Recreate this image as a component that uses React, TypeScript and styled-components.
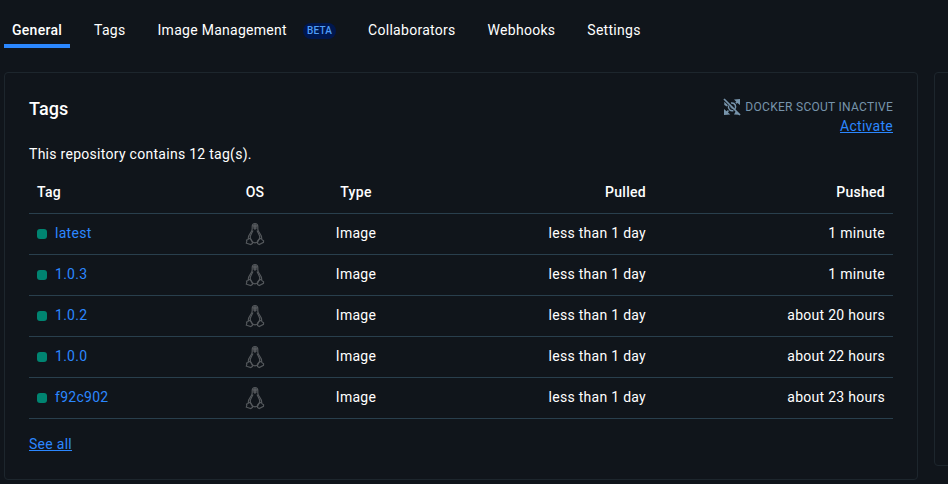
import React from "react";
import styled, { createGlobalStyle } from "styled-components";

const GlobalStyle = createGlobalStyle`
  * { box-sizing: border-box; }
  body {
    margin: 0;
    background: #10151b;
    color: #fff;
    font: 400 14px/20px Roboto, "Liberation Sans", sans-serif;
    letter-spacing: 0.28px;
    overflow: hidden;
  }
`;

const Page = styled.div`
  height: 484px;
  padding-left: 4px;
  overflow: hidden;
`;

const TabBar = styled.nav`
  display: flex;
  gap: 16px;
  height: 48px;
`;

const Tab = styled.a<{ $active?: boolean }>`
  display: flex;
  align-items: center;
  gap: 16px;
  padding: 16px 8px 0;
  border-bottom: 4px solid ${(p) => (p.$active ? "#2b87ff" : "transparent")};
  font-weight: ${(p) => (p.$active ? 500 : 400)};
  white-space: nowrap;
`;

const Badge = styled.span`
  height: 16px;
  margin-top: 1px;
  padding: 0 4px;
  border-radius: 8px;
  background: #00174f;
  color: #4f9df7;
  font-size: 10px;
  font-weight: 500;
  line-height: 16px;
  letter-spacing: 0.2px;
`;

const Columns = styled.main`
  display: flex;
  align-items: flex-start;
  gap: 16px;
  margin-top: 24px;
`;

const Card = styled.section`
  flex: none;
  width: 914px;
  height: 408px;
  padding: 24px;
  border: 1px solid #1d262d;
  border-radius: 4px;
`;

const SideCard = styled(Card)`
  width: 300px;
  height: 394px;
`;

const CardHeader = styled.header`
  display: flex;
  justify-content: space-between;
  height: 47px;
`;

const Title = styled.h2`
  margin: 0;
  font-size: 18px;
  font-weight: 500;
  line-height: 24px;
  letter-spacing: 0.1px;
`;

const Scout = styled.div`
  display: flex;
  flex-direction: column;
  align-items: flex-end;
`;

const ScoutStatus = styled.div`
  display: flex;
  align-items: center;
  gap: 4px;
  height: 19px;
  color: #7794ab;
  font-size: 12px;
`;

const Link = styled.a<{ $underlined?: boolean }>`
  color: #2b87ff;
  text-decoration: ${(p) => (p.$underlined ? "underline" : "none")};
`;

const Summary = styled.p`
  margin: 0;
`;

const Table = styled.table`
  width: 864px;
  margin: 6px 0 15px;
  border-collapse: separate;
  border-spacing: 0;
  table-layout: fixed;
`;

const Col = styled.col<{ $width: number }>`
  width: ${(p) => p.$width}px;
`;

type Align = "left" | "center" | "right";

const HeadCell = styled.th<{ $align: Align }>`
  height: 44px;
  padding: 0 8px;
  border-bottom: 1px solid #293f4d;
  text-align: ${(p) => p.$align};
  font-weight: 500;
`;

const Cell = styled.td<{ $align: Align }>`
  height: 41px;
  padding: 0 8px 2px;
  border-bottom: 1px solid #293f4d;
  text-align: ${(p) => p.$align};
`;

const TagName = styled.div`
  display: flex;
  align-items: center;
  gap: 8px;
`;

const Status = styled.span`
  width: 10px;
  height: 10px;
  margin-top: 2px;
  border-radius: 3px;
  background: #008471;
`;

const PenguinSvg = styled.svg`
  display: block;
  margin: 2px auto 0;
`;

const Penguin = () => (
  <PenguinSvg width="20" height="24" viewBox="0 0 20 24" fill="none" stroke="#54585c" strokeWidth="1.15">
    <path d="M7.2 7V4.5Q7.2 1.5 10 1.5T12.8 4.5V7Q12.8 8.6 14.6 11.2Q17.2 14.8 16.6 17M7.2 7Q7.2 8.6 5.4 11.2Q2.8 14.8 3.4 17" />
    <path d="M8 8.5Q6.4 11.6 5.4 14Q4.8 16.2 6.6 18.7Q7.6 20.8 10 20.8T13.4 18.7Q15.2 16.2 14.6 14Q13.6 11.6 12 8.5" />
    <path d="M3.8 16.4L3 17.6L1.5 18.2L1.8 19.4L1.3 21.2L5.8 22.5L7.6 21.2L7 19.3L5.3 16.7ZM16.2 16.4L17 17.6L18.6 18.8L18.5 20.3L14.2 22.5L12.5 21.5L12.8 18.5L14.7 16.7Z" />
    <path d="M8.2 3Q10 1.5 11.8 3V5.2H8.2ZM8.3 6L10 5.2L11.7 6L10 7.7Z" fill="#54585c" strokeWidth="0.5" />
  </PenguinSvg>
);

const ScoutIcon = () => (
  <svg width="18" height="18" viewBox="0 0 18 18" fill="#7794ab">
    <path d="M11 1.5L17 1V7L14.4 5L13.4 5.8L12.3 4.6L13.3 3.7ZM1 11V17L7.3 16.5L5 14.4L6 13.1L4.9 12L3.6 13.3ZM1.3 3.7L4.9 7.3L3.9 8.4L1.3 6.9ZM12.9 13L14 14L16.5 16.7L11 16.4Z" />
    <path d="M1 1L17 17" stroke="#7794ab" strokeWidth="1.7" />
    <path d="M8 5Q11 4.5 12.2 6.9Q13.3 9.4 11.8 11.3M5.6 7.5Q4.9 10.2 6.7 11.8Q8.4 13.2 10.4 12.5" fill="none" stroke="#7794ab" strokeWidth="1.5" />
    <path d="M7.8 8.6Q8 10.4 9.7 10.6" fill="none" stroke="#7794ab" strokeWidth="1" />
  </svg>
);

const columns: { label: string; width: number; align: Align }[] = [
  { label: "Tag", width: 176, align: "left" },
  { label: "OS", width: 100, align: "center" },
  { label: "Type", width: 102, align: "center" },
  { label: "Pulled", width: 247, align: "right" },
  { label: "Pushed", width: 239, align: "right" },
];

const rows = [
  { tag: "latest", pushed: "1 minute" },
  { tag: "1.0.3", pushed: "1 minute" },
  { tag: "1.0.2", pushed: "about 20 hours" },
  { tag: "1.0.0", pushed: "about 22 hours" },
  { tag: "f92c902", pushed: "about 23 hours" },
];

export default function App() {
  return (
    <Page>
      <GlobalStyle />
      <TabBar>
        <Tab $active>General</Tab>
        <Tab>Tags</Tab>
        <Tab>Image Management<Badge>BETA</Badge></Tab>
        <Tab>Collaborators</Tab>
        <Tab>Webhooks</Tab>
        <Tab>Settings</Tab>
      </TabBar>
      <Columns>
        <Card>
          <CardHeader>
            <Title>Tags</Title>
            <Scout>
              <ScoutStatus><ScoutIcon />DOCKER SCOUT INACTIVE</ScoutStatus>
              <Link $underlined>Activate</Link>
            </Scout>
          </CardHeader>
          <Summary>This repository contains 12 tag(s).</Summary>
          <Table>
            <colgroup>
              {columns.map((c) => <Col key={c.label} $width={c.width} />)}
            </colgroup>
            <thead>
              <tr>
                {columns.map((c) => <HeadCell key={c.label} $align={c.align}>{c.label}</HeadCell>)}
              </tr>
            </thead>
            <tbody>
              {rows.map((row) => (
                <tr key={row.tag}>
                  <Cell $align="left"><TagName><Status /><Link>{row.tag}</Link></TagName></Cell>
                  <Cell $align="center"><Penguin /></Cell>
                  <Cell $align="center">Image</Cell>
                  <Cell $align="right">less than 1 day</Cell>
                  <Cell $align="right">{row.pushed}</Cell>
                </tr>
              ))}
            </tbody>
          </Table>
          <Link $underlined>See all</Link>
        </Card>
        <SideCard />
      </Columns>
    </Page>
  );
}
